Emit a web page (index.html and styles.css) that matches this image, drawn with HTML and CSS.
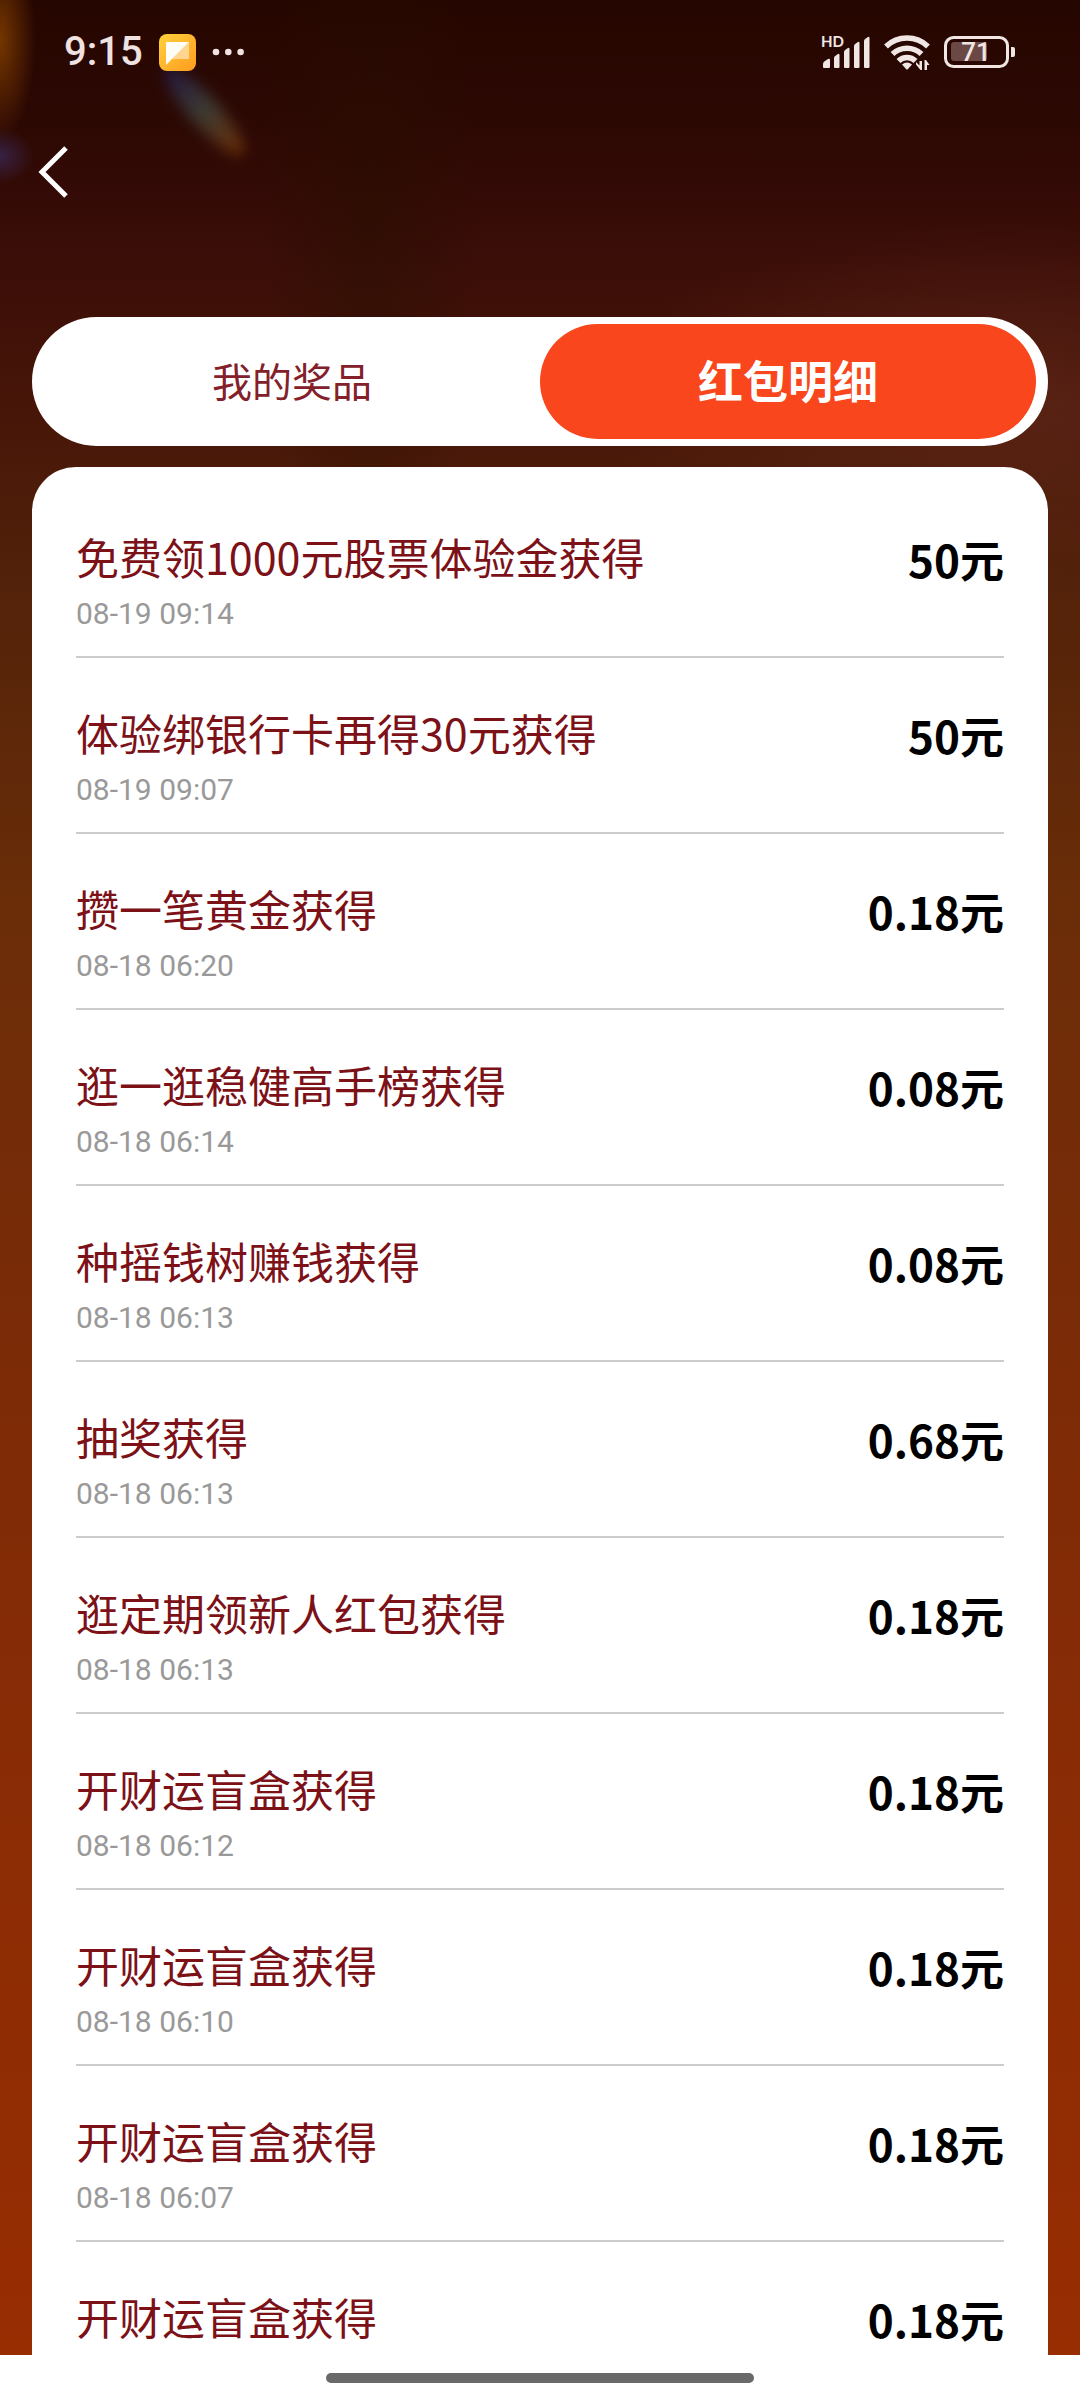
FILE: index.html
```html
<!DOCTYPE html>
<html lang="zh-CN">
<head>
<meta charset="utf-8">
<meta name="viewport" content="width=device-width, initial-scale=1">
<title>红包明细</title>
<link rel="stylesheet" href="styles.css">
</head>
<body>
<div class="screen">
  <header class="status">
    <div class="status-side">
      <span class="clock">9:15</span>
      <svg class="app-icon" width="37" height="37" viewBox="0 0 37 37" aria-hidden="true">
        <defs><linearGradient id="app" x1="0" y1="0" x2="1" y2="1"><stop offset="0" stop-color="#ffd23c"/><stop offset="1" stop-color="#ff9a1f"/></linearGradient></defs>
        <rect width="37" height="37" rx="8" fill="url(#app)"/>
        <path d="M30 8v17H13z" fill="#ffd590"/>
        <path d="M7 8h23L7 31z" fill="#fffdf6"/>
      </svg>
      <svg class="dots" width="32" height="8" viewBox="0 0 32 8" fill="#f0e2e0" aria-hidden="true"><circle cx="4" cy="4" r="3.3"/><circle cx="16.3" cy="4" r="3.3"/><circle cx="28.6" cy="4" r="3.3"/></svg>
    </div>
    <div class="status-side status-icons">
      <div class="signal">
        <span class="hd">HD</span>
        <svg width="50" height="34" viewBox="0 0 50 34" fill="#f0e6e4" aria-hidden="true">
          <path d="M2 32v-3q0-2 2-3l3-2q2-1 2 1v7q0 1-1 1H3q-1 0-1-1z"/>
          <path d="M13 32V23q0-1.500 1.500-2.300l2-1.500q2-1 2 1V32q0 1-1 1H14q-1 0-1-1z"/>
          <path d="M23 32V17q0-1.500 1.500-2.300l2-1.500q2-1 2 1V32q0 1-1 1H24q-1 0-1-1z"/>
          <path d="M33 32V11q0-1.500 1.500-2.300l2-1.500q2-1 2 1V32q0 1-1 1H34q-1 0-1-1z"/>
          <path d="M43 32V6q0-1.500 1.500-2.300l2-1.500q2-1 2 1V32q0 1-1 1H44q-1 0-1-1z"/>
        </svg>
      </div>
      <svg width="47" height="36" viewBox="0 0 47 36" fill="none" aria-hidden="true">
        <g stroke="#f0e6e4" stroke-width="5.500">
          <path d="M2 12.500a30.500 30.500 0 0 1 42 0"/>
          <path d="M8.500 20a21 21 0 0 1 29 0"/>
          <path d="M14.500 27a12 12 0 0 1 17 0"/>
        </g>
        <path d="M18 30.500q5-4 10 0l-4 4.500q-1 1-2 0z" fill="#f0e6e4"/>
        <path d="M32 28l3.500 3.500V27H38v9h-1.500L32 30.500zM40.500 36V26H42l3.500 5h-2.500v5z" fill="#f0e6e4"/>
      </svg>
      <svg class="battery" width="72" height="32" viewBox="0 0 72 32" aria-hidden="true">
        <rect x="1.500" y="1.500" width="62" height="29" rx="8" fill="none" stroke="#f0e6e4" stroke-width="3"/>
        <rect x="7" y="6" width="36" height="19" rx="3" fill="#6b4844"/>
        <path d="M67 11h2q2 0 2 2v6q0 2-2 2h-2z" fill="#f0e6e4"/>
        <text x="32" y="25" text-anchor="middle" class="level">71</text>
      </svg>
    </div>
  </header>

  <nav class="navbar">
    <button class="back" type="button" aria-label="返回">
      <svg width="32" height="52" viewBox="0 0 32 52" fill="none" stroke="#fff" stroke-width="5" aria-hidden="true"><path d="M30 2 6 26l24 24"/></svg>
    </button>
  </nav>

  <div class="tabs" role="tablist">
    <button class="tab" type="button" role="tab" aria-selected="false">我的奖品</button>
    <button class="tab tab-active" type="button" role="tab" aria-selected="true">红包明细</button>
  </div>

  <main class="card">
    <ul class="list">
      <li class="row"><div class="info"><h2 class="title">免费领1000元股票体验金获得</h2><time class="date">08-19 09:14</time></div><strong class="amount">50元</strong></li>
      <li class="row"><div class="info"><h2 class="title">体验绑银行卡再得30元获得</h2><time class="date">08-19 09:07</time></div><strong class="amount">50元</strong></li>
      <li class="row"><div class="info"><h2 class="title">攒一笔黄金获得</h2><time class="date">08-18 06:20</time></div><strong class="amount">0.18元</strong></li>
      <li class="row"><div class="info"><h2 class="title">逛一逛稳健高手榜获得</h2><time class="date">08-18 06:14</time></div><strong class="amount">0.08元</strong></li>
      <li class="row"><div class="info"><h2 class="title">种摇钱树赚钱获得</h2><time class="date">08-18 06:13</time></div><strong class="amount">0.08元</strong></li>
      <li class="row"><div class="info"><h2 class="title">抽奖获得</h2><time class="date">08-18 06:13</time></div><strong class="amount">0.68元</strong></li>
      <li class="row"><div class="info"><h2 class="title">逛定期领新人红包获得</h2><time class="date">08-18 06:13</time></div><strong class="amount">0.18元</strong></li>
      <li class="row"><div class="info"><h2 class="title">开财运盲盒获得</h2><time class="date">08-18 06:12</time></div><strong class="amount">0.18元</strong></li>
      <li class="row"><div class="info"><h2 class="title">开财运盲盒获得</h2><time class="date">08-18 06:10</time></div><strong class="amount">0.18元</strong></li>
      <li class="row"><div class="info"><h2 class="title">开财运盲盒获得</h2><time class="date">08-18 06:07</time></div><strong class="amount">0.18元</strong></li>
      <li class="row"><div class="info"><h2 class="title">开财运盲盒获得</h2></div><strong class="amount">0.18元</strong></li>
    </ul>
  </main>

  <footer class="home"><span class="home-bar"></span></footer>
</div>
</body>
</html>
```
FILE: styles.css
```css
* { box-sizing: border-box; }

body {
  margin: 0;
  font-family: "Noto Sans CJK SC", sans-serif;
  background: #fff;
}

button {
  border: 0;
  background: none;
  font-family: inherit;
  cursor: pointer;
}

.screen {
  position: relative;
  isolation: isolate;
  height: 100vh;
  display: flex;
  flex-direction: column;
  overflow: hidden;
  background:
    radial-gradient(ellipse 36px 100px at 0 40px, rgba(150, 75, 0, .7), transparent),
    radial-gradient(ellipse 34px 28px at 0 156px, rgba(60, 50, 110, .6), transparent),
    radial-gradient(ellipse 400px 180px at 1000px 400px, rgba(110, 50, 35, .45), transparent),
    radial-gradient(ellipse 110px 420px at 370px 230px, rgba(40, 15, 0, .5), transparent),
    linear-gradient(#260600 0, #2c0803 120px, #3a0d08 250px, #471508 400px, #54230a 600px, #6a2d08 900px, #7a2b07 1300px, #8a2c05 1800px, #982d02 2355px);
}

/* Lens flare streak behind the status bar */
.screen::before {
  content: "";
  position: absolute;
  z-index: -1;
  left: 146px;
  top: 96px;
  width: 116px;
  height: 30px;
  border-radius: 50%;
  background: linear-gradient(90deg, #221440, #3c3a32 50%, #6b2c04);
  filter: blur(7px);
  transform: rotate(48deg);
}

/* System status bar */
.status {
  display: flex;
  justify-content: space-between;
  align-items: center;
  flex: none;
  height: 104px;
  padding: 0 64px;
}

.status-side {
  display: flex;
  align-items: center;
  gap: 16px;
}

.status-icons {
  gap: 13px;
}

.clock {
  color: #f0e2e0;
  font: 500 40px/48px Roboto, sans-serif;
}

.signal {
  position: relative;
  display: flex;
}

.hd {
  position: absolute;
  left: 0;
  top: 0;
  color: #f0e6e4;
  font: 700 15px/12px Lato, sans-serif;
}

.level {
  fill: #f0e6e4;
  font: 500 26px Roboto, sans-serif;
}

.navbar {
  flex: none;
  height: 213px;
  padding: 30px 24px;
}

.back {
  display: flex;
  padding: 12px;
}

/* Tabs */
.tabs {
  display: flex;
  flex: none;
  height: 129px;
  margin: 0 32px 21px;
  padding: 7px 12px;
  border-radius: 65px;
  background: #fff;
}

.tab {
  flex: 1;
  padding: 0 0 4px;
  border-radius: 58px;
  color: #84202a;
  font-size: 40px;
  line-height: 60px;
}

.tab-active {
  background: #f9461c;
  color: #fff;
  font-size: 45px;
  font-weight: 700;
}

/* Records */
.card {
  flex: 1;
  min-height: 0;
  margin: 0 32px;
  padding: 15px 44px 0;
  overflow: hidden;
  border-radius: 44px 44px 0 0;
  background: #fff;
}

.list {
  margin: 0;
  padding: 0;
  list-style: none;
}

.row {
  display: flex;
  justify-content: space-between;
  align-items: flex-start;
  height: 176px;
  padding-top: 44px;
  border-bottom: 2px solid #ccc;
}

.title {
  margin: 0;
  color: #7c1118;
  font-size: 43px;
  font-weight: 400;
  line-height: 60px;
}

.date {
  display: block;
  color: #999;
  font: 400 30px/56px Roboto, sans-serif;
}

.amount {
  color: #000;
  font-size: 44px;
  font-weight: 700;
  line-height: 66px;
}

/* Gesture bar */
.home {
  display: flex;
  justify-content: center;
  flex: none;
  height: 45px;
  padding-top: 18px;
  background: #fff;
}

.home-bar {
  width: 428px;
  height: 10px;
  border-radius: 5px;
  background: #696969;
}
```
